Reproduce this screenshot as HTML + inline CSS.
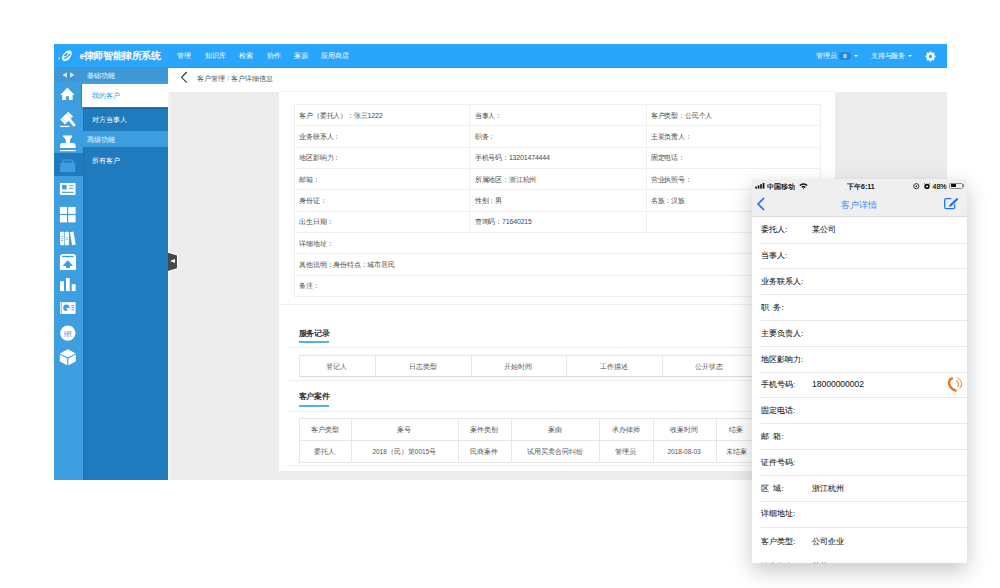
<!DOCTYPE html>
<html><head><meta charset="utf-8">
<style>
*{margin:0;padding:0;box-sizing:border-box}
html,body{width:1000px;height:588px;overflow:hidden;background:#fff;font-family:"Liberation Sans",sans-serif}
div,span,svg{position:absolute}
.tx{white-space:nowrap;line-height:9px;font-size:7px}
.w{color:#fff}
.sep{height:1px;background:#f0f0f0}
.ttl{font-size:8px;line-height:9px;font-weight:bold;color:#333;white-space:nowrap;letter-spacing:-0.35px}
.ul{height:2px;background:#5aaee6}
.cell{font-size:7px;line-height:9px;color:#4a4a4a;letter-spacing:-0.18px;white-space:nowrap}
.bl{background:#f0f0f0}
.ctr{text-align:center;font-size:6.5px;line-height:9px;color:#555;white-space:nowrap}
.pl{font-size:8px;line-height:9px;color:#1a1a1a;-webkit-text-stroke:0.08px #1a1a1a;white-space:nowrap;left:9px}
.pv{font-size:8px;line-height:9px;color:#1a1a1a;-webkit-text-stroke:0.08px #1a1a1a;white-space:nowrap;left:60px}
.ps{left:9px;width:206px;height:1px;background:#e8e8e8}
</style></head><body>
<!-- top bar -->
<div style="left:54px;top:44px;width:893px;height:24px;background:#29a5fc"></div>
<div style="left:54px;top:66.5px;width:893px;height:1.2px;background:#1f9cf6"></div>
<svg style="left:56px;top:48px" width="20" height="15" viewBox="0 0 20 15">
 <ellipse cx="10.9" cy="7.8" rx="6.2" ry="3.7" transform="rotate(-50 10.9 7.8)" fill="#fff"/>
 <ellipse cx="9.9" cy="6.6" rx="2.2" ry="1.2" transform="rotate(-40 9.9 6.6)" fill="#29a5fc"/>
 <path d="M7.6 10.6 Q11 10 14.2 5.8" fill="none" stroke="#29a5fc" stroke-width="1.4"/>
 <circle cx="3.1" cy="10.2" r="1" fill="#a9d9fb"/>
</svg>
<div class="tx w" style="left:79.5px;top:50.2px;font-size:9.5px;line-height:11px;font-weight:bold;letter-spacing:-0.4px"><span style="position:static;font-size:8.5px">e</span>律师智能律所系统</div>
<div class="tx w" style="left:177px;top:51.2px">管理</div>
<div class="tx w" style="left:205px;top:51.2px">知识库</div>
<div class="tx w" style="left:239px;top:51.2px">检索</div>
<div class="tx w" style="left:267px;top:51.2px">协作</div>
<div class="tx w" style="left:294px;top:51.2px">案源</div>
<div class="tx w" style="left:321px;top:51.2px">应用商店</div>
<div class="tx w" style="left:816px;top:51.2px">管理员</div>
<div style="left:838.8px;top:52px;width:12px;height:8px;border-radius:4px;background:#2189d2"></div>
<div class="tx w" style="left:838.8px;top:51.6px;width:12px;text-align:center;font-size:6px;font-weight:bold">0</div>
<div style="left:854px;top:55px;width:0;height:0;border-left:2.2px solid transparent;border-right:2.2px solid transparent;border-top:2.2px solid #fff"></div>
<div class="tx w" style="left:871.4px;top:51.2px;letter-spacing:-0.3px">支持与服务</div>
<div style="left:907.8px;top:55px;width:0;height:0;border-left:2.2px solid transparent;border-right:2.2px solid transparent;border-top:2.2px solid #fff"></div>
<svg style="left:925px;top:51px" width="11" height="11" viewBox="0 0 11 11"><g fill="#fff"><circle cx="5.5" cy="5.5" r="3.7"/><rect x="4.4" y="0.6" width="2.2" height="9.8"/><rect x="0.6" y="4.4" width="9.8" height="2.2"/><rect x="4.4" y="0.6" width="2.2" height="9.8" transform="rotate(45 5.5 5.5)"/><rect x="0.6" y="4.4" width="9.8" height="2.2" transform="rotate(45 5.5 5.5)"/></g><circle cx="5.5" cy="5.5" r="1.7" fill="#29a5fc"/></svg>

<!-- sidebar -->
<div style="left:54px;top:67.7px;width:28.5px;height:412.3px;background:#3d9ee0"></div>
<div style="left:82.5px;top:67.7px;width:85.5px;height:412.3px;background:#1f7bbd"></div>
<div style="left:81.5px;top:176.3px;width:1px;height:303.7px;background:#45a4e6"></div>
<div style="left:82.5px;top:108.5px;width:1px;height:22.5px;background:#1b72b3"></div>
<div style="left:82.5px;top:147.4px;width:1px;height:332.6px;background:#1b72b3"></div>
<div style="left:82px;top:80.5px;width:86px;height:3.5px;background:#3d9ee0"></div>
<div style="left:54px;top:67.7px;width:114px;height:13.8px;background:#3e98d6"></div>
<svg style="left:62px;top:72px" width="13" height="6" viewBox="0 0 13 6"><polygon points="0.5,3 5,0.3 5,5.7" fill="#cfe6f7"/><polygon points="12.5,3 8,0.3 8,5.7" fill="#cfe6f7"/></svg>
<div class="tx w" style="left:87px;top:71.3px">基础功能</div>
<div style="left:81.3px;top:83.7px;width:1px;height:23.8px;background:#2a84c6"></div>
<div style="left:82.3px;top:83.7px;width:85.7px;height:23.8px;background:#fff"></div>
<div style="left:82.3px;top:107.5px;width:85.7px;height:1px;background:#1769ab"></div>
<div class="tx" style="left:92.3px;top:91px;color:#3a9de3">我的客户</div>
<div class="tx w" style="left:92.3px;top:115.4px">对方当事人</div>
<div style="left:82.5px;top:131px;width:85.5px;height:16.4px;background:#3d9ee0"></div>
<div class="tx w" style="left:87px;top:135.4px">高级功能</div>
<div class="tx w" style="left:92.3px;top:155.5px">所有客户</div>
<div style="left:54px;top:152.8px;width:28.5px;height:23.5px;background:#1f7bbd"></div>
<svg style="left:54px;top:67px" width="28" height="413" viewBox="54 67 28 413">
<g fill="#fff">
<polygon points="67.4,87.6 60.3,94.9 74.5,94.9"/><rect x="62.2" y="94" width="10.4" height="6"/>
<rect x="65.9" y="96.3" width="3" height="3.7" fill="#3d9ee0"/>
<polygon points="68.2,111.8 73,116.6 65,124.4 60.2,119.6"/>
<path d="M69.6 119.6 L74 125" stroke="#fff" stroke-width="2.8" stroke-linecap="round"/>
<path d="M66.9 113.4 L71.3 117.9 M62 118.3 L66.2 122.8" stroke="#3d9ee0" stroke-width="0.55" stroke-dasharray="1.2 0.5"/>
<rect x="60" y="125.8" width="9.5" height="1.3"/>
<path d="M63.2 135.6 L72 135.6 Q72.6 135.6 72.2 136.4 L70.4 139.2 L70 139.6 L70 143.2 L65.7 143.2 L65.7 139.6 L65.3 139.2 L63 136.4 Q62.6 135.6 63.2 135.6 Z"/>
<path d="M60.1 148 L60.1 145 Q60.1 143 62.5 143 L73.2 143 Q75.6 143 75.6 145 L75.6 148 Z"/>
<rect x="60.1" y="150" width="15.5" height="1.2"/>
</g>
<g fill="#3d9ee0">
<rect x="63" y="160" width="9.6" height="3.4" fill="none" stroke="#3d9ee0" stroke-width="1.2"/>
<rect x="60.2" y="162.8" width="15" height="9.2"/>
</g>
<g fill="#fff">
<rect x="59.9" y="183.1" width="15.7" height="12" rx="0.8"/>
<rect x="62.1" y="184.9" width="4.5" height="4.5" fill="#3d9ee0"/>
<rect x="69" y="185.3" width="4.5" height="0.9" fill="#3d9ee0"/>
<rect x="69" y="187.8" width="4.5" height="0.9" fill="#3d9ee0"/>
<rect x="62.1" y="191.8" width="11.4" height="1.1" fill="#3d9ee0"/>
<rect x="59.9" y="206.9" width="7.1" height="7"/><rect x="68.2" y="206.9" width="7.4" height="7"/>
<rect x="59.9" y="215.1" width="7.1" height="7.3"/><rect x="68.2" y="215.1" width="7.4" height="7.3"/>
<rect x="60.1" y="231.7" width="4.1" height="13.5" rx="0.8"/><rect x="64.8" y="231.7" width="4.1" height="13.5" rx="0.8"/>
<polygon points="69.9,232.2 73.4,231.6 75.7,244.6 72.1,245.3"/>
<rect x="61.2" y="236" width="2" height="0.6" fill="#3d9ee0"/><rect x="61.2" y="238.2" width="2" height="0.6" fill="#3d9ee0"/><rect x="61.2" y="240.3" width="2" height="0.6" fill="#3d9ee0"/>
<rect x="65.9" y="237" width="2" height="0.6" fill="#3d9ee0"/><rect x="65.9" y="239.2" width="2" height="0.6" fill="#3d9ee0"/>
<path d="M59.9 270 L59.9 257 Q59.9 254 63 254 L72.9 254 Q76 254 76 257 L76 270 Z"/>
<rect x="62.1" y="255.8" width="11.4" height="1.4" fill="#3d9ee0"/>
<polygon points="67.8,260.2 73.1,266 62.5,266" fill="#3d9ee0"/><rect x="65.8" y="265.8" width="4.1" height="2.3" fill="#3d9ee0"/>
<rect x="60.1" y="281.2" width="3.9" height="9.9"/><rect x="66" y="278.1" width="3.7" height="13"/><rect x="71.7" y="284.2" width="3.9" height="6.9"/>
<rect x="60.1" y="301.8" width="0.8" height="12.2"/><rect x="61.6" y="302.2" width="14" height="11.8"/>
<circle cx="66.4" cy="307.8" r="3.2" fill="#3d9ee0"/><path d="M66.4 307.8 L70 307.8 A3.6 3.6 0 0 1 67.5 311.4 Z" fill="#fff"/>
<rect x="71.4" y="305" width="2.6" height="0.9" fill="#3d9ee0"/><rect x="71.4" y="307.2" width="2.6" height="0.9" fill="#3d9ee0"/><rect x="71.4" y="309.4" width="2.6" height="0.9" fill="#3d9ee0"/>
<circle cx="67.8" cy="333.1" r="7.7"/>
<text transform="translate(67.8 336.7) scale(0.6 1)" x="0" y="0" font-size="9" font-family="Liberation Sans" font-weight="bold" text-anchor="middle" fill="#7dbdea">HR</text>
<polygon points="67.8,349.2 75.8,353.4 67.8,357.4 59.8,353.4"/>
<polygon points="59.8,354.6 67.2,358.4 67.2,365.2 59.8,361.6"/>
<polygon points="75.8,354.6 68.4,358.4 68.4,365.2 75.8,361.6"/>
</g>
</svg>

<!-- main content -->
<div style="left:168px;top:67.7px;width:779px;height:24px;background:#fff"></div>
<div style="left:168px;top:91.7px;width:779px;height:388.3px;background:#ececec"></div>
<div style="left:168px;top:91.7px;width:1.5px;height:388.3px;background:#f7f3f1"></div>
<svg style="left:180px;top:71px" width="9" height="13" viewBox="0 0 9 13"><path d="M6.8 1 L1.6 6.3 L6.8 11.6" fill="none" stroke="#333" stroke-width="1.1"/></svg>
<div class="tx" style="left:197.2px;top:73.5px;color:#555">客户管理 <span style="position:static;color:#aaa">/</span> 客户详细信息</div>

<!-- card -->
<div style="left:279.3px;top:91.7px;width:556.2px;height:379.6px;background:#fff"></div>
<div style="left:279.3px;top:91px;width:556.2px;height:1px;background:#f2f2f2"></div>
<!-- detail table grid -->
<div class="bl" style="left:294px;top:104px;width:527px;height:1px"></div>
<div class="bl" style="left:294px;top:125.3px;width:527px;height:1px"></div>
<div class="bl" style="left:294px;top:146.7px;width:527px;height:1px"></div>
<div class="bl" style="left:294px;top:168px;width:527px;height:1px"></div>
<div class="bl" style="left:294px;top:189.4px;width:527px;height:1px"></div>
<div class="bl" style="left:294px;top:210.7px;width:527px;height:1px"></div>
<div class="bl" style="left:294px;top:232px;width:527px;height:1px"></div>
<div class="bl" style="left:294px;top:253.4px;width:527px;height:1px"></div>
<div class="bl" style="left:294px;top:274.7px;width:527px;height:1px"></div>
<div class="bl" style="left:294px;top:296px;width:527px;height:1px"></div>
<div class="bl" style="left:294px;top:104px;width:1px;height:193px"></div>
<div class="bl" style="left:820px;top:104px;width:1px;height:193px"></div>
<div class="bl" style="left:469.3px;top:104px;width:1px;height:128px"></div>
<div class="bl" style="left:645.5px;top:104px;width:1px;height:128px"></div>
<div class="cell" style="left:299.3px;top:110.5px">客户（委托人）：张三1222</div>
<div class="cell" style="left:474.8px;top:110.5px">当事人：</div>
<div class="cell" style="left:650.8px;top:110.5px">客户类型：公民个人</div>
<div class="cell" style="left:299.3px;top:131.8px">业务联系人：</div>
<div class="cell" style="left:474.8px;top:131.8px">职务：</div>
<div class="cell" style="left:650.8px;top:131.8px">主要负责人：</div>
<div class="cell" style="left:299.3px;top:153.2px">地区影响力：</div>
<div class="cell" style="left:474.8px;top:153.2px">手机号码：13201474444</div>
<div class="cell" style="left:650.8px;top:153.2px">固定电话：</div>
<div class="cell" style="left:299.3px;top:174.5px">邮箱：</div>
<div class="cell" style="left:474.8px;top:174.5px">所属地区：浙江杭州</div>
<div class="cell" style="left:650.8px;top:174.5px">营业执照号：</div>
<div class="cell" style="left:299.3px;top:195.9px">身份证：</div>
<div class="cell" style="left:474.8px;top:195.9px">性别：男</div>
<div class="cell" style="left:650.8px;top:195.9px">名族：汉族</div>
<div class="cell" style="left:299.3px;top:217.2px">出生日期：</div>
<div class="cell" style="left:474.8px;top:217.2px">查询码：71640215</div>
<div class="cell" style="left:299.3px;top:238.5px">详细地址：</div>
<div class="cell" style="left:299.3px;top:259.9px">其他说明：身份特点：城市居民</div>
<div class="cell" style="left:299.3px;top:281.2px">备注：</div>

<div class="sep" style="left:279.3px;top:303.5px;width:556px"></div>
<div class="ttl" style="left:298.6px;top:328.6px">服务记录</div>
<div class="ul" style="left:298.6px;top:341.2px;width:30.6px"></div>
<div class="sep" style="left:286.5px;top:347px;width:542px"></div>
<!-- service table -->
<div style="left:298.6px;top:354.6px;width:522.4px;height:22.4px;border:1px solid #e6e6e6;border-bottom:1.5px solid #dcdcdc"></div>
<div class="bl" style="left:375.2px;top:354.6px;width:1px;height:22px;background:#e6e6e6"></div>
<div class="bl" style="left:470.6px;top:354.6px;width:1px;height:22px;background:#e6e6e6"></div>
<div class="bl" style="left:565.8px;top:354.6px;width:1px;height:22px;background:#e6e6e6"></div>
<div class="bl" style="left:661.6px;top:354.6px;width:1px;height:22px;background:#e6e6e6"></div>
<div class="bl" style="left:757px;top:354.6px;width:1px;height:22px;background:#e6e6e6"></div>
<div class="ctr" style="left:298.6px;width:76.6px;top:361.5px">登记人</div>
<div class="ctr" style="left:375.2px;width:95.4px;top:361.5px">日志类型</div>
<div class="ctr" style="left:470.6px;width:95.2px;top:361.5px">开始时间</div>
<div class="ctr" style="left:565.8px;width:95.8px;top:361.5px">工作描述</div>
<div class="ctr" style="left:661.6px;width:95.4px;top:361.5px">公开状态</div>
<div class="sep" style="left:286.5px;top:380.4px;width:542px"></div>
<div class="ttl" style="left:298.6px;top:392.1px">客户案件</div>
<div class="ul" style="left:298.6px;top:404.6px;width:30.6px"></div>
<div class="sep" style="left:286.5px;top:411px;width:542px"></div>
<!-- case table -->
<div style="left:298.7px;top:418.4px;width:522.3px;height:44.4px;border:1px solid #e6e6e6"></div>
<div class="bl" style="left:298.7px;top:439.8px;width:522.3px;height:1px;background:#e6e6e6"></div>
<div class="bl" style="left:351.2px;top:418.4px;width:1px;height:44px;background:#e6e6e6"></div>
<div class="bl" style="left:457.5px;top:418.4px;width:1px;height:44px;background:#e6e6e6"></div>
<div class="bl" style="left:510.5px;top:418.4px;width:1px;height:44px;background:#e6e6e6"></div>
<div class="bl" style="left:599.3px;top:418.4px;width:1px;height:44px;background:#e6e6e6"></div>
<div class="bl" style="left:652.6px;top:418.4px;width:1px;height:44px;background:#e6e6e6"></div>
<div class="bl" style="left:715.6px;top:418.4px;width:1px;height:44px;background:#e6e6e6"></div>
<div class="bl" style="left:757px;top:418.4px;width:1px;height:44px;background:#e6e6e6"></div>
<div class="ctr" style="left:298.7px;width:52.5px;top:424.8px">客户类型</div>
<div class="ctr" style="left:351.2px;width:106.3px;top:424.8px">案号</div>
<div class="ctr" style="left:457.5px;width:53px;top:424.8px">案件类别</div>
<div class="ctr" style="left:510.5px;width:88.8px;top:424.8px">案由</div>
<div class="ctr" style="left:599.3px;width:53.3px;top:424.8px">承办律师</div>
<div class="ctr" style="left:652.6px;width:63px;top:424.8px">收案时间</div>
<div class="ctr" style="left:715.6px;width:41.4px;top:424.8px">结案</div>
<div class="ctr" style="left:298.7px;width:52.5px;top:446.8px">委托人</div>
<div class="ctr" style="left:351.2px;width:106.3px;top:446.8px">2018（民）第0015号</div>
<div class="ctr" style="left:457.5px;width:53px;top:446.8px">民商案件</div>
<div class="ctr" style="left:510.5px;width:88.8px;top:446.8px">试用买卖合同纠纷</div>
<div class="ctr" style="left:599.3px;width:53.3px;top:446.8px">管理员</div>
<div class="ctr" style="left:652.6px;width:63px;top:446.8px">2018-08-03</div>
<div class="ctr" style="left:715.6px;width:41.4px;top:446.8px">未结案</div>
<div class="sep" style="left:286.5px;top:465.2px;width:542px"></div>

<!-- collapse tab -->
<div style="left:168px;top:251.7px;width:10.2px;height:20.2px;background:#fff;clip-path:polygon(0 0,100% 16%,100% 84%,0 100%)"></div>
<div style="left:168px;top:252.7px;width:9px;height:18.2px;background:#484848;clip-path:polygon(0 0,100% 15%,100% 85%,0 100%)"></div>
<div style="left:169.8px;top:259.2px;width:0;height:0;border-top:2.9px solid transparent;border-bottom:2.9px solid transparent;border-right:5px solid #fff"></div>

<!-- phone -->
<div style="left:752px;top:179px;width:215.2px;height:384px;background:#fff;overflow:hidden;box-shadow:0 8px 20px rgba(0,0,0,.22)">
  <div style="left:0;top:0;width:215.2px;height:38px;background:#efefef;border-bottom:1px solid #dadada"></div>
  <svg style="left:3px;top:4px" width="11" height="6" viewBox="0 0 11 6"><rect x="0.2" y="3.6" width="1.7" height="2" fill="#111"/><rect x="2.7" y="2.4" width="1.7" height="3.2" fill="#111"/><rect x="5.2" y="1.2" width="1.7" height="4.4" fill="#111"/><rect x="7.7" y="0" width="1.7" height="5.6" fill="#111"/></svg>
  <div class="tx" style="left:15px;top:3px;font-size:7px;color:#111;-webkit-text-stroke:0.2px #111">中国移动</div>
  <svg style="left:46.5px;top:3.6px" width="9" height="6" viewBox="0 0 9 6"><path d="M0.3 2 A6 6 0 0 1 8.7 2 L7.6 3.1 A4.5 4.5 0 0 0 1.4 3.1 Z M2.2 3.9 A3.2 3.2 0 0 1 6.8 3.9 L5.7 5 A1.6 1.6 0 0 0 3.3 5 Z M3.9 5.6 L4.5 5 L5.1 5.6 L4.5 6.2 Z" fill="#111"/></svg>
  <div class="tx" style="left:95px;top:3.2px;font-size:7px;color:#111;font-weight:bold">下午6:11</div>
  <svg style="left:161px;top:4px" width="18" height="7" viewBox="0 0 18 7"><circle cx="3.3" cy="3.2" r="2.6" fill="none" stroke="#222" stroke-width="0.9"/><path d="M2.2 4 L3.3 2 L4.4 4 Z" fill="#222"/><circle cx="14" cy="3.4" r="2.7" fill="#111"/><circle cx="14" cy="3.4" r="1" fill="#efefef"/><path d="M11.2 0.6 L12.4 1.4 M16.8 0.6 L15.6 1.4" stroke="#111" stroke-width="0.9"/></svg>
  <div class="tx" style="left:180.5px;top:3.2px;font-size:7px;color:#000;-webkit-text-stroke:0.15px #000">48%</div>
  <div style="left:197.3px;top:3.6px;width:13.6px;height:6px;border:0.8px solid #888;border-radius:1.6px"><div style="left:0.6px;top:0.6px;width:5.2px;height:3.2px;background:#111"></div></div>
  <div style="left:211.2px;top:5.4px;width:1px;height:2.4px;background:#888"></div>
  <svg style="left:4px;top:18px" width="10" height="14" viewBox="0 0 10 14"><path d="M8 1 L2 7 L8 13" fill="none" stroke="#1a6ff7" stroke-width="1.6"/></svg>
  <div class="tx" style="left:89.3px;top:20.6px;font-size:9px;line-height:11px;color:#3d8ff0">客户详情</div>
  <svg style="left:190px;top:17px" width="18" height="16" viewBox="0 0 18 16"><path d="M9.4 2.7 L4.2 2.7 Q2.7 2.7 2.7 4.2 L2.7 11.2 Q2.7 12.7 4.2 12.7 L11.2 12.7 Q12.7 12.7 12.7 11.2 L12.7 8.2" fill="none" stroke="#1f74f0" stroke-width="1.3"/><path d="M7.8 8.6 L14.2 2.4 Q15 1.7 15.8 2.5 Q16.5 3.3 15.8 4 L9.4 10.2 L7 11 Z" fill="#1f74f0"/></svg>

  <div class="pl" style="top:45.9px">委托人:</div><div class="pv" style="top:45.9px">某公司</div>
  <div class="ps" style="top:63.5px"></div>
  <div class="pl" style="top:72.3px">当事人:</div>
  <div class="ps" style="top:89.3px"></div>
  <div class="pl" style="top:98.1px">业务联系人:</div>
  <div class="ps" style="top:115.2px"></div>
  <div class="pl" style="top:124px">职&nbsp;&nbsp;务:</div>
  <div class="ps" style="top:141px"></div>
  <div class="pl" style="top:149.8px">主要负责人:</div>
  <div class="ps" style="top:166.8px"></div>
  <div class="pl" style="top:175.6px">地区影响力:</div>
  <div class="ps" style="top:192.6px"></div>
  <div class="pl" style="top:201.4px">手机号码:</div><div class="pv" style="top:201.4px;font-size:8.5px">18000000002</div>
  <svg style="left:192px;top:195px" width="22" height="22" viewBox="0 0 22 22"><path d="M8 4.4 Q4.6 5.6 5.2 10 Q6.4 14.8 11.6 16.6" fill="none" stroke="#e8731a" stroke-width="2.4" stroke-linecap="round"/><path d="M11.9 6.5 Q16.2 9.4 13.5 12.8" fill="none" stroke="#eb8a3c" stroke-width="1.1"/><path d="M12.8 3.4 Q21 8.4 15.7 14.2" fill="none" stroke="#ef9d5a" stroke-width="1.1"/></svg>
  <div class="ps" style="top:218.4px"></div>
  <div class="pl" style="top:227.2px">固定电话:</div>
  <div class="ps" style="top:244.2px"></div>
  <div class="pl" style="top:253px">邮&nbsp;&nbsp;箱:</div>
  <div class="ps" style="top:270px"></div>
  <div class="pl" style="top:278.8px">证件号码:</div>
  <div class="ps" style="top:295.8px"></div>
  <div class="pl" style="top:304.6px">区&nbsp;&nbsp;域:</div><div class="pv" style="top:304.6px">浙江杭州</div>
  <div class="ps" style="top:321.6px"></div>
  <div class="pl" style="top:330.4px">详细地址:</div>
  <div class="ps" style="top:347.5px"></div>
  <div class="pl" style="top:357.5px">客户类型:</div><div class="pv" style="top:357.5px">公司企业</div>
  <div class="pl" style="top:382.5px">法定代表:</div><div class="pv" style="top:382.5px">某某</div>
</div>
</body></html>
